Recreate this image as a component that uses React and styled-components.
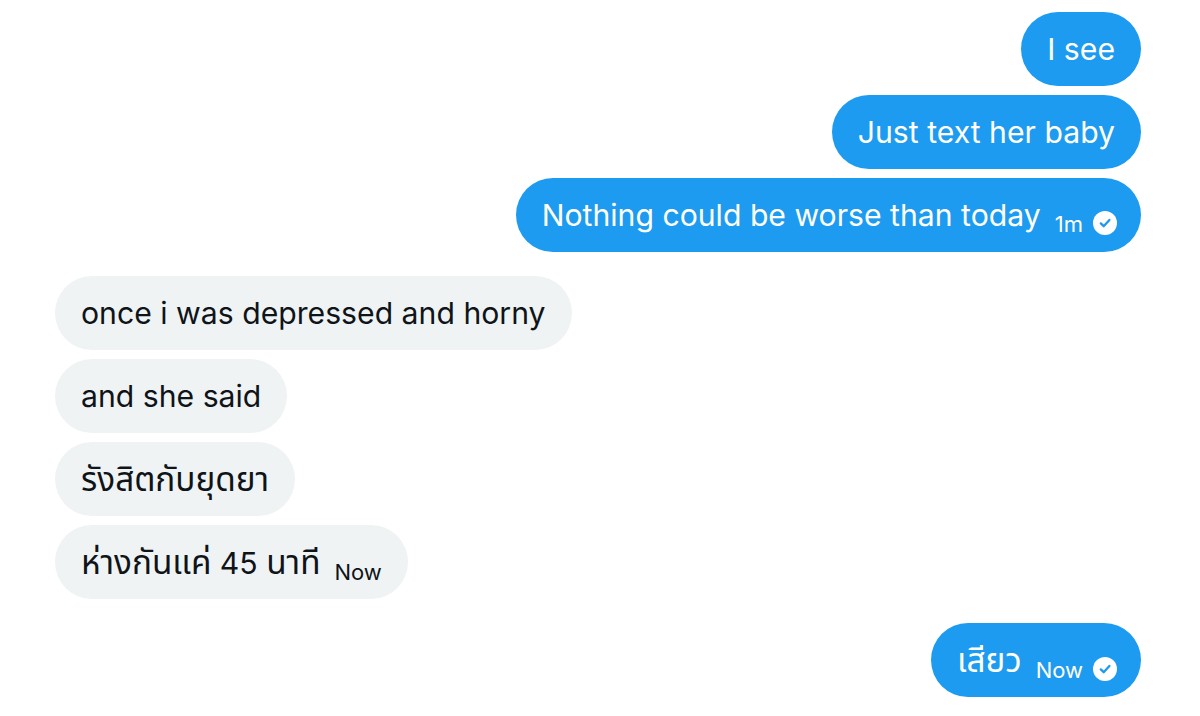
import React from 'react';
import styled, { createGlobalStyle } from 'styled-components';

const GlobalStyle = createGlobalStyle`
  html, body {
    margin: 0;
    padding: 0;
    background: #ffffff;
  }
  body {
    font-family: Inter, "Noto Sans", "Noto Sans Thai", "Liberation Sans", sans-serif;
  }
`;

const Thread = styled.div`
  display: flex;
  flex-direction: column;
  padding: 12px 59px 0 55px;
  width: 1200px;
  box-sizing: border-box;
`;

const Group = styled.div`
  display: flex;
  flex-direction: column;
  align-items: ${(p) => (p.$mine ? 'flex-end' : 'flex-start')};
  gap: 9px;
  margin-bottom: 24px;
`;

const Bubble = styled.div`
  display: inline-flex;
  align-items: baseline;
  box-sizing: border-box;
  height: 74px;
  padding: 0 26px;
  line-height: 74px;
  border-radius: 37px;
  font-size: 30.2px;
  background: ${(p) => (p.$mine ? '#1d9bf0' : '#eff3f4')};
  color: ${(p) => (p.$mine ? '#ffffff' : '#0f1419')};
  white-space: nowrap;
`;

// Thai glyphs render narrower in the fallback font, so bump them up a little
const Thai = styled.span`
  font-size: 33.3px;
`;

const Meta = styled.span`
  display: inline-flex;
  align-items: center;
  gap: 10px;
  margin-left: 14px;
  font-size: 22px;
  position: relative;
  top: 6px;
`;

const CheckMark = styled.svg`
  width: 24px;
  height: 24px;
  margin-right: -2px;
  position: relative;
  top: -1px;
`;

function Check() {
  return (
    <CheckMark viewBox="0 0 24 24">
      <circle cx="12" cy="12" r="12" fill="#ffffff" />
      <path
        d="M7.8 12.4 L10.7 15.2 L16.4 8.9"
        fill="none"
        stroke="#1d9bf0"
        strokeWidth="2.3"
        strokeLinecap="round"
        strokeLinejoin="round"
      />
    </CheckMark>
  );
}

function App() {
  return (
    <>
      <GlobalStyle />
      <Thread>
        <Group $mine>
          <Bubble $mine>I see</Bubble>
          <Bubble $mine>Just text her baby</Bubble>
          <Bubble $mine>
            Nothing could be worse than today
            <Meta>
              1m <Check />
            </Meta>
          </Bubble>
        </Group>
        <Group>
          <Bubble>once i was depressed and horny</Bubble>
          <Bubble>and she said</Bubble>
          <Bubble>
            <Thai>รังสิตกับยุดยา</Thai>
          </Bubble>
          <Bubble>
            <Thai>ห่างกันแค่</Thai>&nbsp;45&nbsp;<Thai>นาที</Thai>
            <Meta>Now</Meta>
          </Bubble>
        </Group>
        <Group $mine>
          <Bubble $mine>
            <Thai>เสียว</Thai>
            <Meta>
              Now <Check />
            </Meta>
          </Bubble>
        </Group>
      </Thread>
    </>
  );
}

export default App;
